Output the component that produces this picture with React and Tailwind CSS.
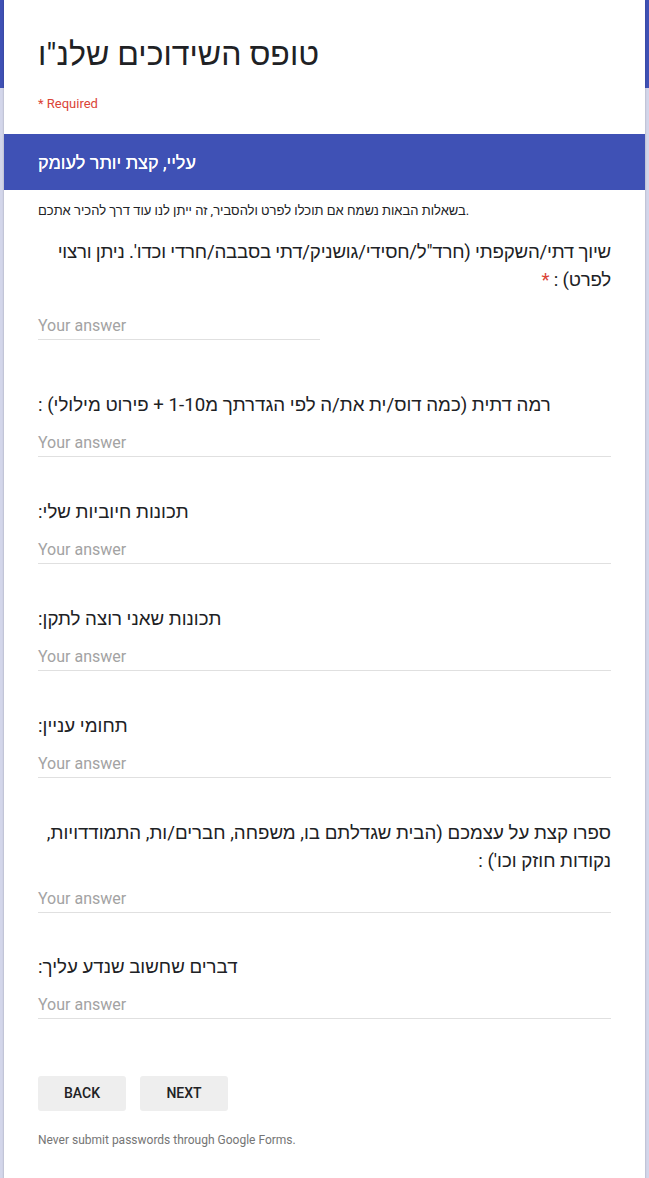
const FONT = "font-['Roboto','Liberation_Sans',Arial,sans-serif]";

const questions = [
  { title: 'רמה דתית (כמה דוס/ית את/ה לפי הגדרתך מ1-10 + פירוט מילולי) :', gap: 'mt-[51px]' },
  { title: 'תכונות חיוביות שלי:', gap: 'mt-[41px]' },
  { title: 'תכונות שאני רוצה לתקן:', gap: 'mt-[41px]' },
  { title: 'תחומי עניין:', gap: 'mt-[41px]' },
  {
    title: 'ספרו קצת על עצמכם (הבית שגדלתם בו, משפחה, חברים/ות, התמודדויות, נקודות חוזק וכו\') :',
    gap: 'mt-[41px]',
  },
  { title: 'דברים שחשוב שנדע עליך:', gap: 'mt-[40px]' },
];

function ParagraphQuestion({ title, gap }) {
  return (
    <div className={gap}>
      <div dir="rtl" className="inline-block max-w-full text-[18.7px] leading-[28px] text-[#202124]">
        {title}
      </div>
      <div className="mt-[12px] h-[26px] border-b border-[#e0e0e0] text-[16px] leading-[24px] text-[#a3a3a3]">
        Your answer
      </div>
    </div>
  );
}

export default function App() {
  return (
    <div
      className={`${FONT} min-h-[1178px] bg-[linear-gradient(#3f51b5_0,#3f51b5_88px,#d3d6ea_88px)] px-[4px]`}
    >
      <div className="min-h-[1178px] bg-white shadow-[0_0_2px_rgba(0,0,0,0.25)]">
        {/* Header */}
        <div className="px-[34px] pt-[34px]">
          <h1 className="text-[32px] leading-[40px] text-[#202124]">טופס השידוכים שלנ"ו</h1>
          <p className="mt-[22px] text-[13px] leading-[16px] text-[#db4437]">* Required</p>
        </div>

        {/* Section banner */}
        <div className="mt-[22px] flex h-[56px] items-center bg-[#3f51b5] px-[34px]">
          <h2 className="text-[18px] text-white [text-shadow:0_0_0.4px_#fff]">עליי, קצת יותר לעומק</h2>
        </div>

        <div className="px-[34px] pb-[40px]">
          <p className="mt-[11px] text-[13px] leading-[20px] text-[#202124]">
            בשאלות הבאות נשמח אם תוכלו לפרט ולהסביר, זה ייתן לנו עוד דרך להכיר אתכם.
          </p>

          {/* Short answer */}
          <div className="mt-[17px]">
            <div
              dir="rtl"
              className="inline-block max-w-full text-[18.7px] leading-[28px] tracking-[-0.2px] text-[#202124]"
            >
              שיוך דתי/השקפתי (חרד"ל/חסידי/גושניק/דתי בסבבה/חרדי וכדו'. ניתן ורצוי לפרט) :{' '}
              <span className="text-[#db4437]">*</span>
            </div>
            <div className="mt-[20px] h-[26px] w-[282px] border-b border-[#e0e0e0] text-[16px] leading-[24px] text-[#a3a3a3]">
              Your answer
            </div>
          </div>

          {questions.map((q) => (
            <ParagraphQuestion key={q.title} title={q.title} gap={q.gap} />
          ))}

          <div className="mt-[57px] flex gap-[14px]">
            <button className="h-[35px] w-[88px] rounded-[3px] bg-[#eeeeee] text-[14px] font-medium uppercase text-[#202124]">
              Back
            </button>
            <button className="h-[35px] w-[88px] rounded-[3px] bg-[#eeeeee] text-[14px] font-medium uppercase text-[#202124]">
              Next
            </button>
          </div>

          <p className="mt-[21px] text-[12px] leading-[16px] text-[#757575]">
            Never submit passwords through Google Forms.
          </p>
        </div>
      </div>
    </div>
  );
}
